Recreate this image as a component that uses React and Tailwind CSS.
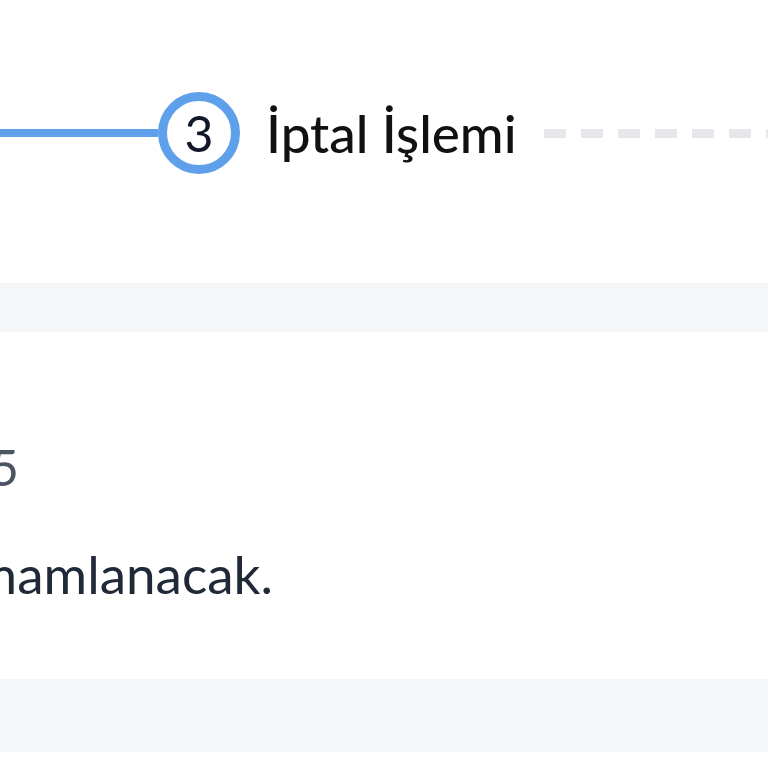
export default function App() {
  return (
    <div className="w-[768px] h-[768px] overflow-hidden bg-white font-['Lato','Noto_Sans',sans-serif]">
      {/* stepper */}
      <div className="flex items-center pt-[92px]">
        <div className="w-[158px] h-[8px] bg-[#5fa0ea] flex-none" />
        <div className="w-[82px] h-[82px] flex-none rounded-full border-[9px] border-[#5fa0ea] bg-white flex items-center justify-center">
          <span className="text-[50px] leading-none text-[#111827]">3</span>
        </div>
        <span className="ml-[26px] text-[53px] leading-[52px] font-medium text-[#111111] whitespace-nowrap">İptal İşlemi</span>
        <div className="ml-[27px] flex-1 h-[9px] bg-[repeating-linear-gradient(to_right,#e6e7ea_0px,#e6e7ea_22px,transparent_22px,transparent_37px)]" />
      </div>

      {/* section header */}
      <div className="mt-[109px] h-[49px] bg-[#f5f6f8]" />

      {/* details */}
      <div className="pt-[109px] pb-[79px]">
        <div className="w-[19px] flex justify-end overflow-hidden">
          <span className="text-[50px] leading-[52px] text-[#4b5563] whitespace-nowrap">İşlem tarihi: 12.05.2025</span>
        </div>
        <div className="mt-[55px] w-[273px] flex justify-end overflow-hidden">
          <span className="text-[53px] leading-[52px] text-[#1f2937] whitespace-nowrap">İptal işleminiz 3 iş günü içinde tamamlanacak.</span>
        </div>
      </div>

      {/* next section */}
      <div className="h-[73px] bg-[#f5f6f8]" />
    </div>
  );
}
